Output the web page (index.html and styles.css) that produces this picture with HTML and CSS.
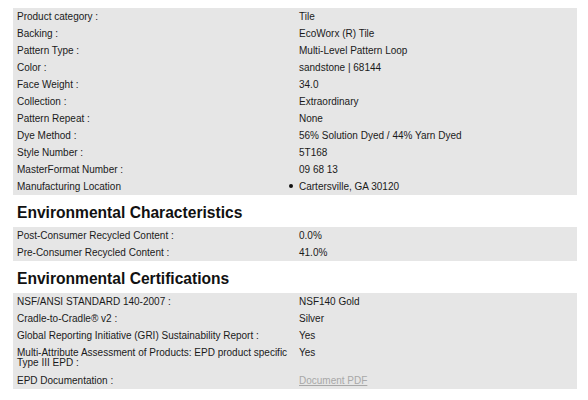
FILE: index.html
```html
<!DOCTYPE html>
<html lang="en">
<head>
<meta charset="utf-8">
<title>Product Specifications</title>
<link rel="stylesheet" href="styles.css">
</head>
<body>
<div class="page">
  <table class="specs">
    <tr><td>Product category :</td><td>Tile</td></tr>
    <tr><td>Backing :</td><td>EcoWorx (R) Tile</td></tr>
    <tr><td>Pattern Type :</td><td>Multi-Level Pattern Loop</td></tr>
    <tr><td>Color :</td><td>sandstone | 68144</td></tr>
    <tr><td>Face Weight :</td><td>34.0</td></tr>
    <tr><td>Collection :</td><td>Extraordinary</td></tr>
    <tr><td>Pattern Repeat :</td><td>None</td></tr>
    <tr><td>Dye Method :</td><td>56% Solution Dyed / 44% Yarn Dyed</td></tr>
    <tr><td>Style Number :</td><td>5T168</td></tr>
    <tr><td>MasterFormat Number :</td><td>09 68 13</td></tr>
    <tr><td>Manufacturing Location</td><td><ul class="locations"><li>Cartersville, GA 30120</li></ul></td></tr>
  </table>

  <h2 class="section-title">Environmental Characteristics</h2>
  <table class="specs">
    <tr><td>Post-Consumer Recycled Content :</td><td>0.0%</td></tr>
    <tr><td>Pre-Consumer Recycled Content :</td><td>41.0%</td></tr>
  </table>

  <h2 class="section-title">Environmental Certifications</h2>
  <table class="specs">
    <tr><td>NSF/ANSI STANDARD 140-2007 :</td><td>NSF140 Gold</td></tr>
    <tr><td>Cradle-to-Cradle® v2 :</td><td>Silver</td></tr>
    <tr><td>Global Reporting Initiative (GRI) Sustainability Report :</td><td>Yes</td></tr>
    <tr><td>Multi-Attribute Assessment of Products: EPD product specific Type III EPD :</td><td>Yes</td></tr>
    <tr class="last"><td>EPD Documentation :</td><td><a class="doc-link" href="#">Document PDF</a></td></tr>
  </table>
</div>
</body>
</html>
```
FILE: styles.css
```css
html, body {
  margin: 0;
  padding: 0;
  background: #ffffff;
}

body {
  font-family: "Liberation Sans", Arial, Helvetica, sans-serif;
  color: #1a1a1a;
}

.page {
  width: 564px;
  padding: 8px 0 0 13px;
}

.specs {
  width: 564px;
  table-layout: fixed;
  border-collapse: collapse;
  background: #e6e6e6;
  font-size: 10px;
  line-height: 10px;
}

.specs td {
  width: 50%;
  padding: 3.5px 4px;
  vertical-align: top;
}

.specs .last td {
  padding-top: 4.5px;
}

.section-title {
  margin: 9px 0 5px 4px;
  font-size: 15.6px;
  line-height: 18px;
  font-weight: bold;
  color: #111111;
}

.locations {
  margin: 0;
  padding: 0;
  list-style: none;
}

.locations li::before {
  content: "";
  display: inline-block;
  width: 4px;
  height: 4px;
  border-radius: 50%;
  background: #111111;
  margin-left: -10.5px;
  margin-right: 6.5px;
  vertical-align: 2px;
}

.doc-link {
  color: #a8a8a8;
  text-decoration: underline;
}
```
